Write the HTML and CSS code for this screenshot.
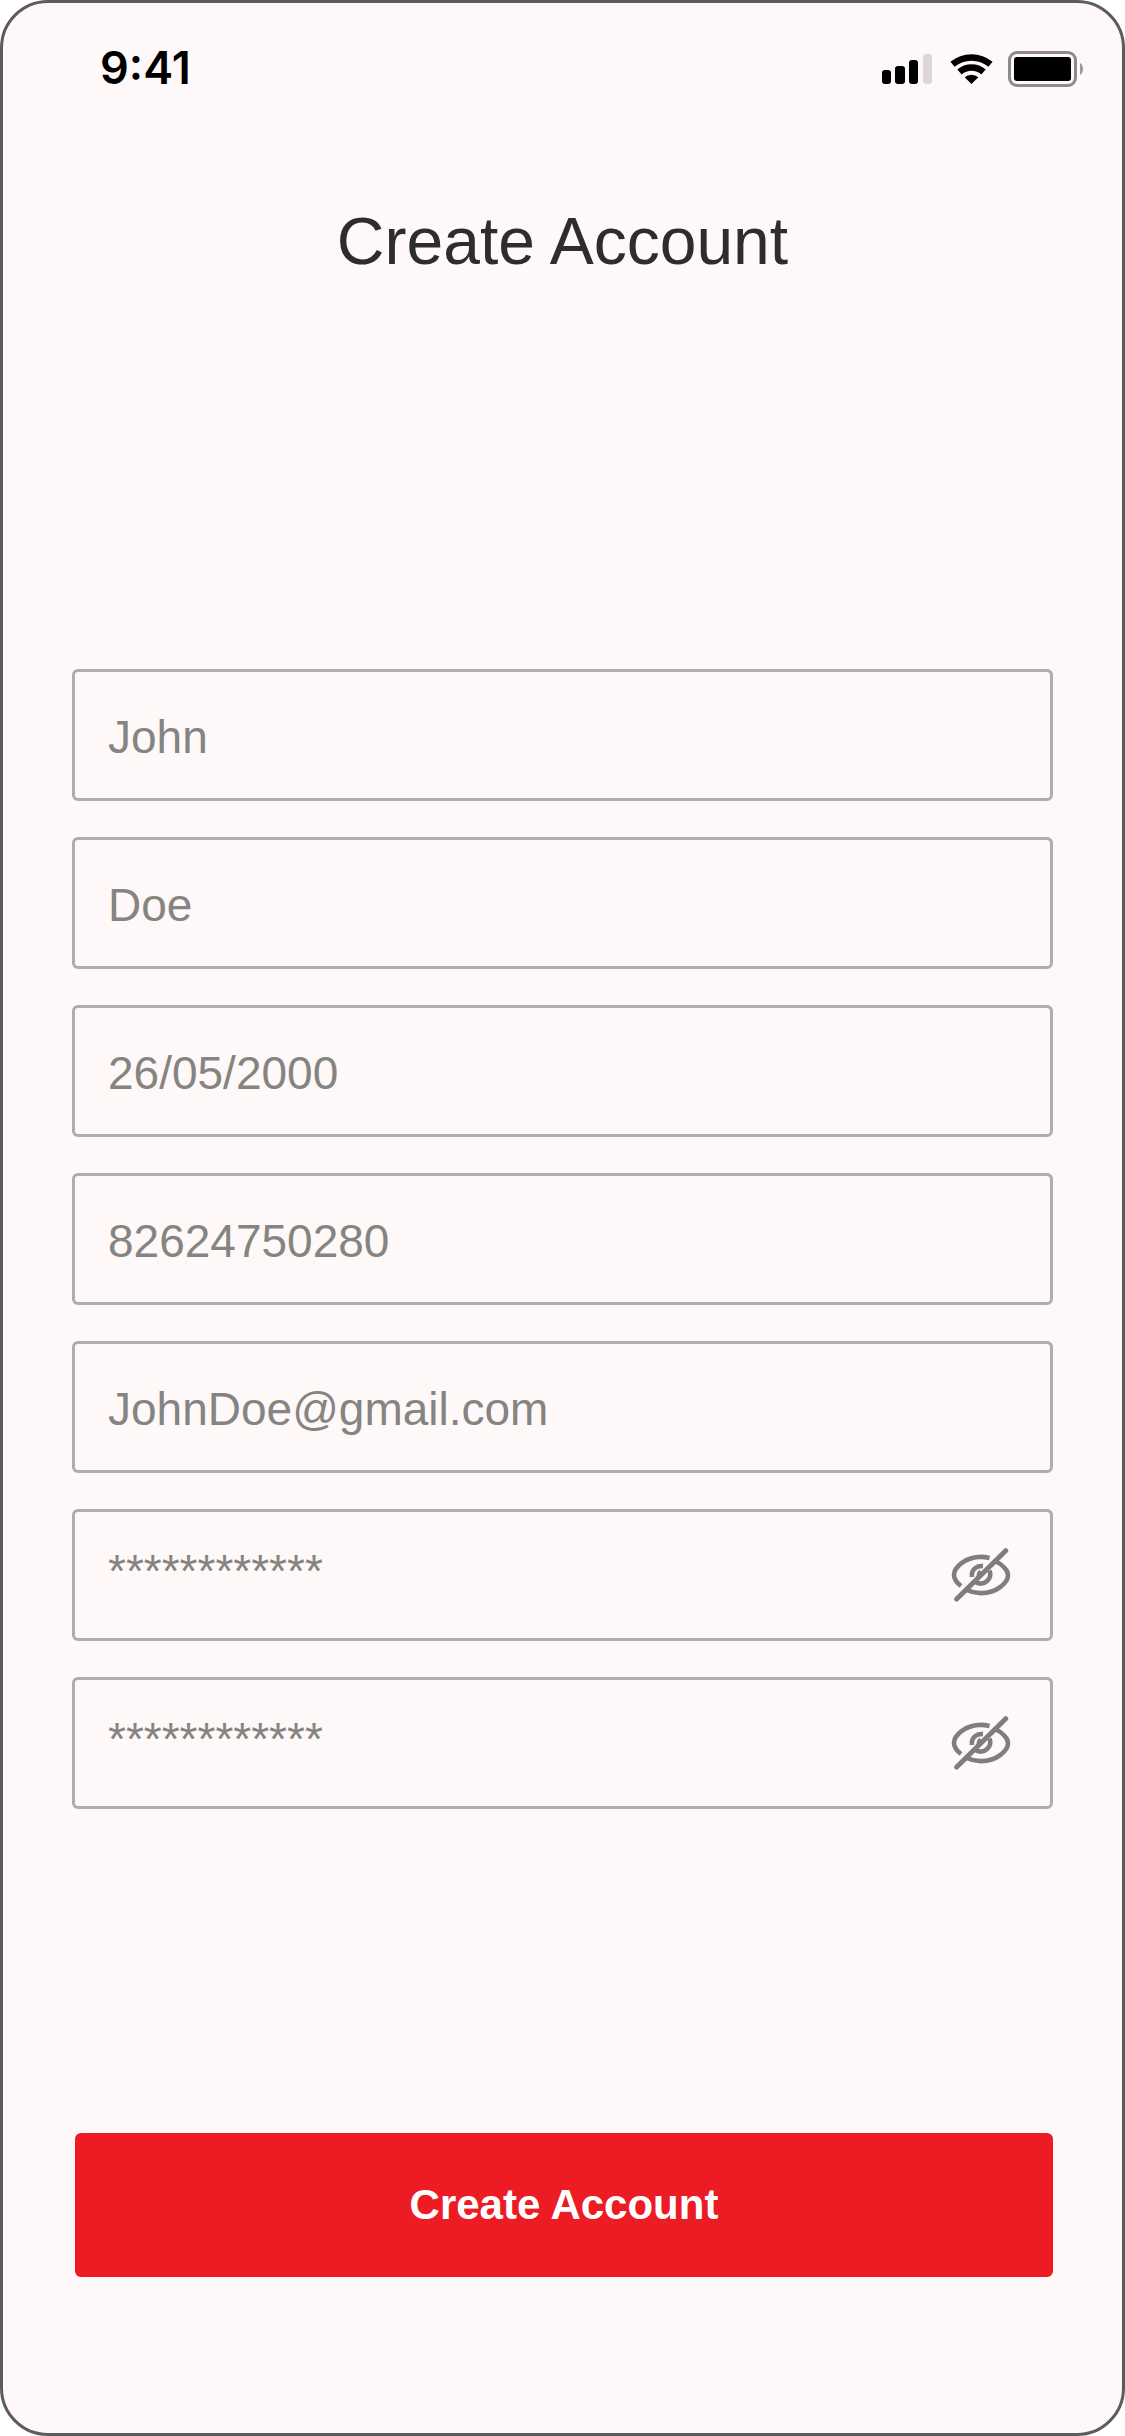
FILE: index.html
```html
<!DOCTYPE html>
<html lang="en">
<head>
<meta charset="utf-8">
<meta name="viewport" content="width=device-width, initial-scale=1">
<title>Create Account</title>
<link rel="stylesheet" href="styles.css">
</head>
<body>
<svg class="sprite" aria-hidden="true">
  <symbol id="eye-off" viewBox="0 0 60 54">
    <g fill="none" stroke="currentColor" stroke-width="4.600" stroke-linecap="butt">
      <path d="M10 38C5.500 34.500 3 31 3 27C3 19.500 14 8.900 30 8.900C33 8.900 36 9.300 38.500 10"/>
      <path d="M44 13C52 16.500 57 23 57 27C57 34.500 46 45.100 30 45.100C25 45.100 20 44 15.500 42"/>
      <path d="M21 29C20 22 25 17.500 32 18"/>
      <path d="M38.500 22.500C41.500 31 33 39 24.500 34"/>
      <path d="M29.500 23C26.500 25 26.500 29 28 31" stroke-width="3"/>
      <path d="M5.700 51L54.700 2.700" stroke-width="5" stroke-linecap="round"/>
    </g>
  </symbol>
</svg>
<div class="screen">
  <header class="status">
    <time class="clock">9:41</time>
    <div class="indicators">
      <svg width="50" height="36" viewBox="0 0 50 36" role="img" aria-label="Signal">
        <rect x="0" y="19" width="9" height="14" rx="3"/>
        <rect x="13" y="15" width="10" height="18" rx="3"/>
        <rect x="27" y="9" width="9" height="24" rx="3"/>
        <rect x="41" y="3" width="9" height="30" rx="3" fill="#dcd6d6"/>
      </svg>
      <svg width="48" height="36" viewBox="-4 0 48 36" role="img" aria-label="Wi-Fi">
        <path d="M21.500 33L28.300 26.300A10 10 0 0 0 14.700 26.300Z"/>
        <path d="M9.500 21A18 18 0 0 1 33.500 21" fill="none" stroke="#000" stroke-width="6.500"/>
        <path d="M2.500 13.300A30 30 0 0 1 40.500 13.300" fill="none" stroke="#000" stroke-width="6.500"/>
      </svg>
      <svg width="75" height="36" viewBox="0 0 75 36" role="img" aria-label="Battery">
        <rect x="1.500" y="1.500" width="66" height="33" rx="7.500" fill="none" stroke="#8e898b" stroke-width="3"/>
        <rect x="6" y="6" width="57" height="24" rx="3"/>
        <path d="M72 12C76 14 76 22 72 24Z" fill="#9c9799"/>
      </svg>
    </div>
  </header>
  <main class="content">
    <h1 class="title">Create Account</h1>
    <form class="form">
      <div class="fields">
        <div class="field"><input class="input" type="text" aria-label="First name" placeholder="John"></div>
        <div class="field"><input class="input" type="text" aria-label="Last name" placeholder="Doe"></div>
        <div class="field"><input class="input" type="text" aria-label="Date of birth" placeholder="26/05/2000"></div>
        <div class="field"><input class="input" type="tel" aria-label="Phone number" placeholder="82624750280"></div>
        <div class="field"><input class="input" type="email" aria-label="Email" placeholder="JohnDoe@gmail.com"></div>
        <div class="field">
          <input class="input input-masked" type="password" aria-label="Password" placeholder="************">
          <button class="reveal" type="button" aria-label="Show password"><svg width="60" height="54"><use href="#eye-off"/></svg></button>
        </div>
        <div class="field">
          <input class="input input-masked" type="password" aria-label="Confirm password" placeholder="************">
          <button class="reveal" type="button" aria-label="Show password confirmation"><svg width="60" height="54"><use href="#eye-off"/></svg></button>
        </div>
      </div>
      <button class="submit" type="submit">Create Account</button>
    </form>
  </main>
</div>
</body>
</html>
```
FILE: styles.css
```css
* {
  box-sizing: border-box;
}

body {
  margin: 0;
  background: #fff;
  font-family: "Liberation Sans", Arial, Helvetica, sans-serif;
}

.sprite {
  display: none;
}

.screen {
  display: flex;
  flex-direction: column;
  min-height: 100vh;
  border: 3px solid #5c5c5c;
  border-radius: 48px;
  background: #fef8f8;
}

.status {
  display: flex;
  justify-content: space-between;
  align-items: center;
  padding: 35px 39px 0 97px;
}

.clock {
  font: 600 45px/60px Inter, sans-serif;
  color: #000;
}

.indicators {
  display: flex;
  align-items: center;
  gap: 14px;
  padding-top: 2px;
}

.content {
  display: flex;
  flex: 1;
  flex-direction: column;
  padding: 105px 69px 156px;
}

.title {
  margin: 0;
  font-size: 66px;
  font-weight: 400;
  line-height: 76px;
  text-align: center;
  color: #2d2d2d;
}

.form {
  display: flex;
  flex: 1;
  flex-direction: column;
  justify-content: space-between;
  padding-top: 390px;
}

.fields {
  display: flex;
  flex-direction: column;
  gap: 36px;
}

.field {
  display: flex;
  align-items: center;
  height: 132px;
  border: 3px solid #b0acac;
  border-radius: 6px;
}

.input {
  flex: 1;
  min-width: 0;
  height: 100%;
  padding: 4px 33px 0;
  border: 0;
  background: none;
  font: inherit;
  font-size: 46px;
  color: #858481;
}

.input-masked {
  padding: 0 33px 8px;
}

.input::placeholder {
  color: #858481;
  opacity: 1;
}

.reveal {
  display: flex;
  padding: 0;
  margin-right: 39px;
  border: 0;
  background: none;
  color: #7f7e7c;
}

.submit {
  height: 144px;
  margin-left: 3px;
  border: 0;
  border-radius: 6px;
  background: #ed1c24;
  font: inherit;
  font-size: 42px;
  font-weight: 700;
  color: #fff;
}
```
